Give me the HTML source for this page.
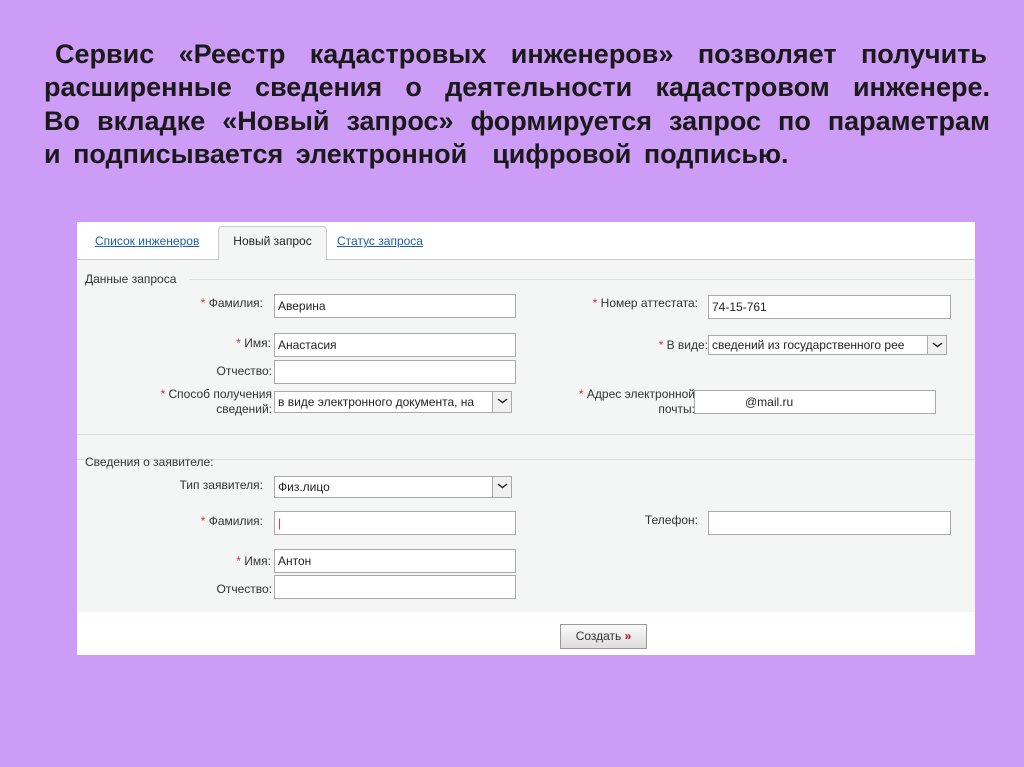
<!DOCTYPE html>
<html><head><meta charset="utf-8"><style>
*{margin:0;padding:0;box-sizing:border-box}
body{width:1024px;height:767px;background:#cc9cf6;position:relative;overflow:hidden;font-family:"Liberation Sans",Arial,sans-serif}
.t{position:absolute;left:44px;width:946px;font-weight:bold;font-size:27px;color:#1a1a1a;white-space:nowrap;text-align:justify;text-align-last:justify}
.p{position:absolute;left:77px;top:222px;width:898px;height:433px;background:#fff}
.f{position:absolute;left:0;top:37px;width:898px;height:353px;background:#f4f5f5;border-top:1px solid #c9c9c9}
.a{position:absolute;font-size:12px;color:#333;text-align:right;line-height:15px}
.a i{color:#d33;font-style:normal}
.in{position:absolute;background:#fff;border:1px solid #a9a9a9;font-size:12px;color:#222;padding:0 3px;line-height:22px;height:24px;white-space:nowrap;overflow:hidden}
.sel:after{content:"";position:absolute;right:0;top:0;width:18px;height:22px;background:#f0f0f0;border-left:1px solid #aaa}
.sel b{position:absolute;right:4px;top:3px;width:9px;height:9px;border-right:2px solid #222;border-bottom:2px solid #222;transform:scale(.8,.6) rotate(45deg);z-index:2}
.hr{position:absolute;left:0;width:898px;height:1px;background:#ddd}
.tab{position:absolute;font-size:12px;color:#1a5fa8;text-decoration:underline;top:12px}
</style></head><body>
<div class="t" style="top:39px;left:55px;width:932px">Сервис «Реестр кадастровых инженеров» позволяет получить</div>
<div class="t" style="top:72px">расширенные сведения о деятельности кадастровом инженере.</div>
<div class="t" style="top:106px">Во вкладке «Новый запрос» формируется запрос по параметрам</div>
<div class="t" style="top:139px;width:800px;text-align-last:left;word-spacing:5px">и подписывается электронной&nbsp; цифровой подписью.</div>
<div class="p">
 <span class="tab" style="left:18px">Список инженеров</span>
 <div style="position:absolute;left:141px;top:4px;width:109px;height:34px;background:#f4f5f5;border:1px solid #c9c9c9;border-bottom:none;border-radius:4px 4px 0 0;font-size:12px;color:#222;text-align:center;line-height:28px;z-index:2">Новый запрос</div>
 <span class="tab" style="left:260px">Статус запроса</span>
 <div class="f">
  <div class="a" style="left:8px;top:12px;text-align:left">Данные запроса</div>
  <div class="hr" style="top:19px;left:112px;width:786px"></div>
  <div class="a" style="right:712px;top:36px"><i>*</i> Фамилия:</div>
  <div class="in" style="left:197px;top:34px;width:242px">Аверина</div>
  <div class="a" style="right:704px;top:76px"><i>*</i> Имя:</div>
  <div class="in" style="left:197px;top:73px;width:242px">Анастасия</div>
  <div class="a" style="right:703px;top:104px">Отчество:</div>
  <div class="in" style="left:197px;top:100px;width:242px"></div>
  <div class="a" style="right:703px;top:127px"><i>*</i> Способ получения<br>сведений:</div>
  <div class="in sel" style="left:197px;top:131px;width:238px;height:22px;line-height:20px">в виде электронного документа, на<b></b></div>
  <div class="a" style="right:277px;top:36px"><i>*</i> Номер аттестата:</div>
  <div class="in" style="left:631px;top:35px;width:243px">74-15-761</div>
  <div class="a" style="right:267px;top:78px"><i>*</i> В виде:</div>
  <div class="in sel" style="left:631px;top:75px;width:239px;height:20px;line-height:18px">сведений из государственного рее<b></b></div>
  <div class="a" style="right:280px;top:127px"><i>*</i> Адрес электронной<br>почты:</div>
  <div class="in" style="left:617px;top:130px;width:242px;padding-left:50px">@mail.ru</div>
  <div class="hr" style="top:174px"></div>
  <div class="hr" style="top:199px"></div>
  <div class="a" style="left:8px;top:195px;text-align:left">Сведения о заявителе:</div>
  <div class="a" style="right:712px;top:218px">Тип заявителя:</div>
  <div class="in sel" style="left:197px;top:216px;width:238px;height:22px;line-height:20px">Физ.лицо<b></b></div>
  <div class="a" style="right:712px;top:254px"><i>*</i> Фамилия:</div>
  <div class="in" style="left:197px;top:251px;width:242px"><span style="color:#d33">|</span></div>
  <div class="a" style="right:277px;top:253px">Телефон:</div>
  <div class="in" style="left:631px;top:251px;width:243px"></div>
  <div class="a" style="right:704px;top:294px"><i>*</i> Имя:</div>
  <div class="in" style="left:197px;top:289px;width:242px">Антон</div>
  <div class="a" style="right:703px;top:322px">Отчество:</div>
  <div class="in" style="left:197px;top:315px;width:242px"></div>
 </div>
 <div style="position:absolute;left:483px;top:402px;width:87px;height:25px;border:1px solid #999;background:linear-gradient(#fafafa,#ddd);font-size:12px;color:#333;line-height:23px;text-align:center">Создать <span style="color:#c00;font-weight:bold">»</span></div>
</div>
</body></html>
